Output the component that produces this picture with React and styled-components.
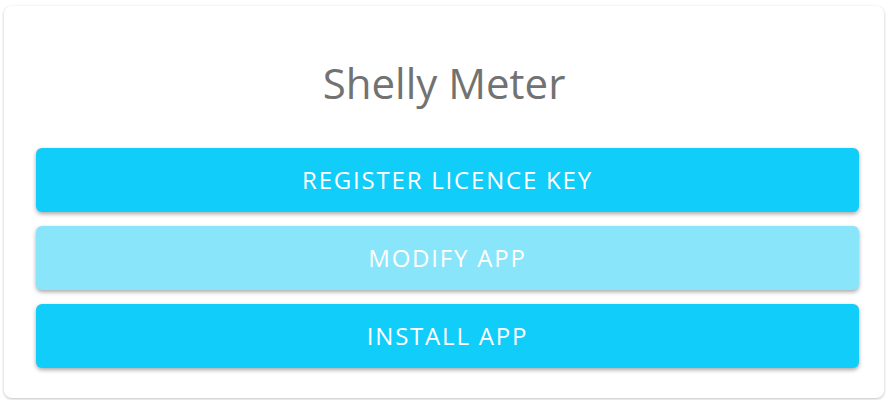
import React from "react";
import styled, { createGlobalStyle } from "styled-components";

const Global = createGlobalStyle`
	body {
		margin: 0;
		background: #ffffff;
		font-family: "Open Sans", "Liberation Sans", sans-serif;
	}
`;

function App() {
	return (
		<>
			<Global />
			<Page>
				<Card>
					<Title>Shelly Meter</Title>
					<ButtonList>
						<ActionButton>Register Licence Key</ActionButton>
						<ActionButton disabled>Modify App</ActionButton>
						<ActionButton>Install App</ActionButton>
					</ButtonList>
				</Card>
			</Page>
		</>
	);
}

const Page = styled.div`
	padding: 6px 6px 2px 4px;
`;
const Card = styled.div`
	width: 880px;
	height: 392px;
	box-sizing: border-box;
	background: white;
	border-radius: 8px;
	box-shadow: 0 1px 3px rgba(0, 0, 0, 0.25);
	padding-top: 48px;
`;
const Title = styled.h1`
	margin: 0;
	text-align: center;
	font-size: 42px;
	font-weight: 400;
	line-height: 57px;
	color: #727272;
`;
const ButtonList = styled.div`
	display: flex;
	flex-direction: column;
	gap: 14px;
	margin-top: 37px;
	padding: 0 25px 0 32px;
`;
const ActionButton = styled.button`
	height: 64px;
	padding: 0 0 2px;
	border: none;
	border-radius: 6px;
	background: ${(p) => (p.disabled ? "#88e5fa" : "#10cdf9")};
	color: white;
	font-family: "Open Sans", "Liberation Sans", sans-serif;
	font-size: 24px;
	letter-spacing: 1.8px;
	text-transform: uppercase;
	box-shadow: 0 2px 4px rgba(0, 0, 0, 0.35);
	cursor: pointer;
`;

export default App;
